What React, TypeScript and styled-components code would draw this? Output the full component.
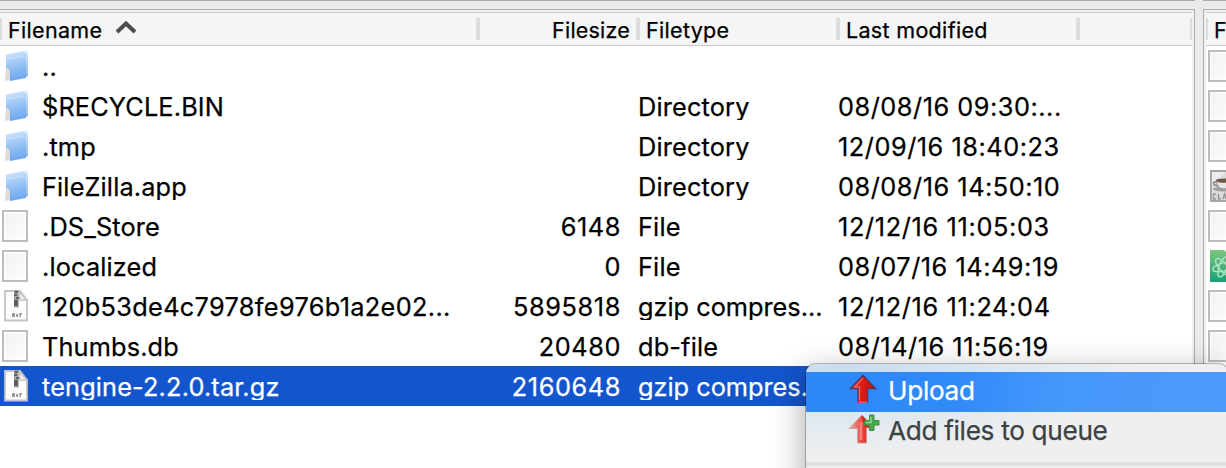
import React from "react";
import styled, { createGlobalStyle, css } from "styled-components";

const GlobalStyle = createGlobalStyle`
  * { box-sizing: border-box; }
  body { margin: 0; overflow: hidden; background: #ebebeb; }
`;

const Window = styled.div`
  position: relative;
  width: 1226px;
  height: 468px;
  overflow: hidden;
  display: flex;
  gap: 8px;
  background: #ebebeb;
  font-family: Inter, "Liberation Sans", sans-serif;
  color: #000;
  -webkit-text-stroke: 0.25px currentColor;
`;

const Column = styled.div<{ $width: number }>`
  display: flex;
  flex-direction: column;
  flex: 0 0 ${(p) => p.$width}px;
  height: 468px;
  overflow: hidden;
`;

const TopStrip = styled.div`
  flex: 0 0 9px;
  border-top: 1px solid #acacac;
`;

const Pane = styled.div<{ $side: "left" | "right" }>`
  flex: 1;
  display: flex;
  flex-direction: column;
  background: #fff;
  border-top: 1px solid #acacac;
  ${(p) =>
    p.$side === "left"
      ? css`border-right: 1px solid #acacac;`
      : css`border-left: 1px solid #acacac;`}
`;

const PaneInner = styled.div<{ $side: "left" | "right" }>`
  flex: 1;
  border: 0 solid #f1f1f1;
  border-top-width: 2px;
  ${(p) => (p.$side === "left" ? "border-right-width: 2px;" : "border-left-width: 2px;")}
`;

const Header = styled.div`
  display: flex;
  height: 34px;
  padding-top: 5px;
  background: #f5f5f5;
  border-top: 1px solid #cacaca;
  border-bottom: 1px solid #cacaca;
`;

const HeaderCell = styled.div<{ $width: number; $edge?: number; $right?: boolean; $end?: boolean }>`
  flex: 0 0 ${(p) => p.$width}px;
  height: 22px;
  border-left: ${(p) => p.$edge ?? 4}px solid #dcdcdc;
  padding: ${(p) => (p.$end ? "0" : "2px 6px 0")};
  display: flex;
  align-items: center;
  justify-content: ${(p) => (p.$right ? "flex-end" : "flex-start")};
  font-size: 21.5px;
  line-height: 22px;
  letter-spacing: ${(p) => (p.$right ? 0.2 : 0.32)}px;
  white-space: nowrap;
`;

const SortArrow = styled.svg`
  flex: none;
  margin: -6px 0 0 13px;
`;

const Row = styled.div<{ $selected?: boolean }>`
  display: grid;
  grid-template-columns: 42px 418px 161px 17px 192px 8px 1fr;
  height: 40px;
  background: ${(p) => (p.$selected ? "#1355cd" : "transparent")};
  color: ${(p) => (p.$selected ? "#fff" : "#000")};
`;

const IconSlot = styled.div<{ $pad: number }>`
  height: 40px;
  padding: 4px 0 0 ${(p) => p.$pad}px;
  svg { display: block; }
`;

const Cell = styled.div<{ $col: number; $right?: boolean; $tracking?: number }>`
  grid-column: ${(p) => p.$col};
  height: 34px;
  overflow: hidden;
  font-size: 25.3px;
  line-height: 41px;
  white-space: nowrap;
  text-align: ${(p) => (p.$right ? "right" : "left")};
  letter-spacing: ${(p) => p.$tracking ?? 0}px;
`;

const Menu = styled.div`
  position: absolute;
  left: 806px;
  top: 364px;
  width: 422px;
  height: 180px;
  padding-top: 8px;
  border-radius: 9px;
  background:
    radial-gradient(ellipse 300px 90px at 40px 0, #c9dcef 0, #dbe7f0 50%, rgba(239, 239, 239, 0) 100%),
    #efefef;
  box-shadow: 0 0 0 1px rgba(0, 0, 0, 0.24), 0 10px 32px 2px rgba(0, 0, 0, 0.32);
`;

const MenuItem = styled.div<{ $active?: boolean }>`
  display: flex;
  align-items: center;
  gap: 8px;
  height: 40px;
  padding-left: 42px;
  font-size: 26.2px;
  line-height: 38px;
  letter-spacing: -0.32px;
  color: ${(p) => (p.$active ? "#fff" : "#3c4143")};
  background: ${(p) =>
    p.$active ? "linear-gradient(100deg, #2d87f4 0, #308af8 35%, #4697fb 60%, #4c9bfb 100%)" : "transparent"};
  svg { flex: none; display: block; margin-top: -6px; }
`;

const MenuLabel = styled.span`
  padding-bottom: 2px;
`;

const MenuDivider = styled.div`
  height: 4px;
  margin-top: 10px;
  background: #dddfdf;
`;

const FolderIcon = () => (
  <svg width="26" height="33" viewBox="0 0 26 33">
    <defs>
      <linearGradient id="folderFront" x1="0" y1="0" x2="0.15" y2="1">
        <stop offset="0" stopColor="#d5e9fc" />
        <stop offset="0.4" stopColor="#a4cbf8" />
        <stop offset="1" stopColor="#70a7ee" />
      </linearGradient>
      <linearGradient id="folderBack" x1="0" y1="0" x2="0" y2="1">
        <stop offset="0" stopColor="#e3effa" />
        <stop offset="1" stopColor="#86b2e8" />
      </linearGradient>
    </defs>
    <path d="M1 5 17 1 23 0.5V26L19 28V4Z" fill="url(#folderBack)" />
    <path d="M1 4.5 17.5 1.5 21 3V28L5 31 1 19Z" fill="url(#folderFront)" />
    <path d="M1 18q4 1 4 4v8l-5 1Z" fill="#dcdcdf" />
    <path d="M2.5 9 20 6" stroke="#ddecfc" strokeWidth="1.2" opacity=".6" />
  </svg>
);

const DocIcon = () => (
  <svg width="26" height="32" viewBox="0 0 26 32">
    <defs>
      <linearGradient id="paper" x1="0" y1="0" x2="1" y2="1">
        <stop offset="0" stopColor="#f3f3f3" />
        <stop offset="1" stopColor="#fcfcfc" />
      </linearGradient>
    </defs>
    <rect x="1" y="1" width="24" height="30" fill="#fff" stroke="#bdbdbd" strokeWidth="2" />
    <rect x="3" y="3" width="20" height="26" fill="url(#paper)" />
  </svg>
);

const ZipIcon = () => (
  <svg width="26" height="32" viewBox="0 0 26 32">
    <path d="M1 1H16L23 10V30.5H1Z" fill="#fdfdfd" stroke="#c4c4c4" strokeWidth="1.8" />
    <path d="M15.5 1.5V10H23Z" fill="#ececec" stroke="#c2c2c2" strokeWidth="1.3" />
    <rect x="10" y="0" width="4.6" height="17.5" fill="#a1a3a3" />
    <path d="M11 1h3v2h-3zM10 4h3v2h-3zM12 7h3v2h-3zM10 10h4v6h-4z" fill="#5c6060" />
    <path d="M8 23h3v4H8zM12 24h2v3h-2zM15 23h3v1.5h-1V27h-1.5z" fill="#9c9c9c" />
  </svg>
);

const JavaIcon = () => (
  <svg width="26" height="32" viewBox="0 0 26 32">
    <rect x="1" y="1" width="24" height="30" fill="#dcdcdc" stroke="#a6a6a6" strokeWidth="2" />
    <path d="M2 2h14L2 15Z" fill="#ededed" />
    <ellipse cx="14" cy="19" rx="11" ry="2.6" fill="#a0a0a0" />
    <path d="M6 10h16q-1 9-8 9t-8-9Z" fill="#e6e6e6" stroke="#9a9a9a" />
    <ellipse cx="14" cy="10.6" rx="8" ry="2.2" fill="#6b5a48" />
    <path d="M7 12H4q-2 3 4 4" fill="none" stroke="#858585" strokeWidth="1.6" />
    <path d="M6 24H3.500v5H6M8.500 24v5H11M13 29l1.500-5 1.500 5" fill="none" stroke="#959595" strokeWidth="1.4" />
  </svg>
);

const AtomIcon = () => (
  <svg width="26" height="32" viewBox="0 0 26 32">
    <defs>
      <linearGradient id="atomPaper" x1="0" y1="0" x2="0" y2="1">
        <stop offset="0" stopColor="#7cc67d" />
        <stop offset="1" stopColor="#16a176" />
      </linearGradient>
    </defs>
    <path d="M0 0H14L26 12V32H0Z" fill="url(#atomPaper)" />
    <g fill="none" stroke="#b4e2c2" strokeWidth="1.4">
      <ellipse cx="13" cy="17" rx="10.5" ry="4" transform="rotate(-15 13 17)" />
      <ellipse cx="13" cy="17" rx="10.5" ry="4" transform="rotate(50 13 17)" />
      <ellipse cx="13" cy="17" rx="10.5" ry="4" transform="rotate(110 13 17)" />
    </g>
  </svg>
);

const UploadIcon = ({ queued }: { queued?: boolean }) => (
  <svg width="32" height="32" viewBox="0 0 32 32">
    <defs>
      <linearGradient id="redArrow" x1="0" y1="0" x2="1" y2="0">
        <stop offset="0" stopColor="#ef4a3b" />
        <stop offset="0.45" stopColor="#dd1c13" />
        <stop offset="1" stopColor="#b91510" />
      </linearGradient>
      <linearGradient id="paleArrow" x1="0" y1="0" x2="1" y2="0">
        <stop offset="0" stopColor="#e0b9b8" />
        <stop offset="0.5" stopColor="#f0483d" />
        <stop offset="1" stopColor="#bd1b14" />
      </linearGradient>
    </defs>
    {queued ? (
      <>
        <path d="M14 2 1 15.500H9.500V30h9V15h7Z" fill="url(#paleArrow)" stroke="#c99b98" strokeWidth=".8" />
        <path d="M13 9v18" stroke="#f78279" strokeWidth="2.500" />
        <path d="M14 2.500 19.500 8v6h-3Z" fill="#c8221a" />
        <path d="M21.500 2h4.500v5.500h5v4.500h-5v5.500h-4.500V12h-5V7.500h5Z" fill="#48a84a" stroke="#3b8f45" strokeWidth="1" />
        <path d="M23 4v5.500H18" fill="none" stroke="#94d58e" strokeWidth="1.500" />
      </>
    ) : (
      <>
        <path d="M15 2.500 2.500 15.500H10V29h9.500V15.500h8Z" fill="url(#redArrow)" stroke="#613052" strokeWidth="1.3" />
        <path d="M11.500 27V14H7l8-9" fill="none" stroke="#f77064" strokeWidth="1.1" />
        <path d="M10 29h9" stroke="#c9505c" strokeWidth="2" />
      </>
    )}
  </svg>
);

const icons = { folder: FolderIcon, doc: DocIcon, zip: ZipIcon, java: JavaIcon, atom: AtomIcon };
type IconKind = keyof typeof icons;

interface Entry {
  icon: IconKind;
  name: string;
  size?: string;
  type?: string;
  date?: string;
  selected?: boolean;
}

const files: Entry[] = [
  { icon: "folder", name: ".." },
  { icon: "folder", name: "$RECYCLE.BIN", type: "Directory", date: "08/08/16 09:30:..." },
  { icon: "folder", name: ".tmp", type: "Directory", date: "12/09/16 18:40:23" },
  { icon: "folder", name: "FileZilla.app", type: "Directory", date: "08/08/16 14:50:10" },
  { icon: "doc", name: ".DS_Store", size: "6148", type: "File", date: "12/12/16 11:05:03" },
  { icon: "doc", name: ".localized", size: "0", type: "File", date: "08/07/16 14:49:19" },
  { icon: "zip", name: "120b53de4c7978fe976b1a2e02...", size: "5895818", type: "gzip compres...", date: "12/12/16 11:24:04" },
  { icon: "doc", name: "Thumbs.db", size: "20480", type: "db-file", date: "08/14/16 11:56:19" },
  { icon: "zip", name: "tengine-2.2.0.tar.gz", size: "2160648", type: "gzip compres...", selected: true },
];

const iconPadding: Record<IconKind, number> = { folder: 5, doc: 2, zip: 4, java: 4, atom: 4 };
const remoteIcons: IconKind[] = ["doc", "doc", "doc", "java", "doc", "atom", "doc", "doc"];

const nameTracking = (name: string) => (/^\d/.test(name) ? 0.34 : 0.15);
const dateTracking = (date = "") => (date.startsWith("12/12") ? 0.65 : 0.53);

export default function App() {
  return (
    <>
      <GlobalStyle />
      <Window>
        <Column $width={1195}>
          <TopStrip />
          <Pane $side="left">
            <PaneInner $side="left">
              <Header>
                <HeaderCell $width={476} $edge={2}>
                  Filename
                  <SortArrow width="22" height="14" viewBox="0 0 22 14">
                    <path d="M2 12 11 3.500 20 12" fill="none" stroke="#4d4d4d" strokeWidth="4" />
                  </SortArrow>
                </HeaderCell>
                <HeaderCell $width={160} $right>Filesize</HeaderCell>
                <HeaderCell $width={200}>Filetype</HeaderCell>
                <HeaderCell $width={240}>Last modified</HeaderCell>
                <HeaderCell $width={114} />
                <HeaderCell $width={2} $edge={2} $end />
              </Header>
              {files.map((file) => {
                const Icon = icons[file.icon];
                return (
                  <Row key={file.name} $selected={file.selected}>
                    <IconSlot $pad={iconPadding[file.icon]}><Icon /></IconSlot>
                    <Cell $col={2} $tracking={nameTracking(file.name)}>{file.name}</Cell>
                    <Cell $col={3} $right $tracking={0.6}>{file.size}</Cell>
                    <Cell $col={5} $tracking={file.icon === "zip" ? 0 : 0.17}>{file.type}</Cell>
                    <Cell $col={7} $tracking={dateTracking(file.date)}>{file.date}</Cell>
                  </Row>
                );
              })}
            </PaneInner>
          </Pane>
        </Column>
        <Column $width={23}>
          <TopStrip />
          <Pane $side="right">
            <PaneInner $side="right">
              <Header>
                <HeaderCell $width={200} $edge={2}>Filename</HeaderCell>
              </Header>
              {remoteIcons.map((kind, i) => {
                const Icon = icons[kind];
                return (
                  <Row key={i}>
                    <IconSlot $pad={iconPadding[kind]}><Icon /></IconSlot>
                  </Row>
                );
              })}
            </PaneInner>
          </Pane>
        </Column>
        <Menu>
          <MenuItem $active><UploadIcon /><MenuLabel>Upload</MenuLabel></MenuItem>
          <MenuItem><UploadIcon queued /><MenuLabel>Add files to queue</MenuLabel></MenuItem>
          <MenuDivider />
        </Menu>
      </Window>
    </>
  );
}
